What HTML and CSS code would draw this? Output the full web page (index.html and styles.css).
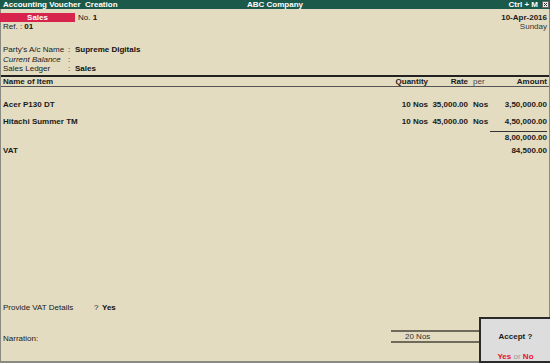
FILE: index.html
```html
<!DOCTYPE html>
<html>
<head>
<meta charset="utf-8">
<link rel="stylesheet" href="styles.css">
</head>
<body>
<div class="screen">
  <div class="titlebar">
    <span class="tb-left">Accounting Voucher&nbsp; Creation</span>
    <span class="tb-center">ABC Company</span>
    <span class="tb-right">Ctrl + M <span class="closebox"><svg width="7" height="7" viewBox="0 0 7 7"><rect x="0.5" y="0.5" width="6" height="6" fill="#e8e8e8" stroke="#666"/><path d="M2 2 L5 5 M5 2 L2 5" stroke="#333" stroke-width="1"/></svg></span></span>
  </div>
  <div class="main">
    <div class="head">
      <div class="head-left">
        <div class="vrow"><span class="vtype">Sales</span><span class="no">No. <b>1</b></span></div>
        <div class="ref">Ref. : <b>01</b></div>
      </div>
      <div class="head-right">
        <div class="date">10-Apr-2016</div>
        <div class="day">Sunday</div>
      </div>
    </div>
    <div class="party">
      <div class="prow"><span class="plabel">Party's A/c Name</span><span class="colon">:</span><b>Supreme Digitals</b></div>
      <div class="prow"><span class="plabel italic">Current Balance</span><span class="colon">:</span></div>
      <div class="prow"><span class="plabel">Sales Ledger</span><span class="colon">:</span><b>Sales</b></div>
    </div>
    <div class="thead grid">
      <span class="c-name">Name of Item</span>
      <span class="c-qty">Quantity</span>
      <span class="c-rate">Rate</span>
      <span class="c-per light">per</span>
      <span class="c-amt">Amount</span>
    </div>
    <div class="items">
      <div class="grid row first">
        <span class="c-name">Acer P130 DT</span>
        <span class="c-qty">10 Nos</span>
        <span class="c-rate">35,000.00</span>
        <span class="c-per">Nos</span>
        <span class="c-amt">3,50,000.00</span>
      </div>
      <div class="grid row">
        <span class="c-name">Hitachi Summer TM</span>
        <span class="c-qty">10 Nos</span>
        <span class="c-rate">45,000.00</span>
        <span class="c-per">Nos</span>
        <span class="c-amt">4,50,000.00</span>
      </div>
      <div class="grid row total">
        <span class="c-name"></span>
        <span class="c-qty"></span>
        <span class="c-rate"></span>
        <span class="c-per"></span>
        <span class="c-amt">8,00,000.00</span>
      </div>
      <div class="grid row vat">
        <span class="c-name">VAT</span>
        <span class="c-qty"></span>
        <span class="c-rate"></span>
        <span class="c-per"></span>
        <span class="c-amt">84,500.00</span>
      </div>
    </div>
    <div class="spacer"></div>
    <div class="vatdetails"><span class="vlabel">Provide VAT Details</span><span class="q">?</span><b>Yes</b></div>
    <div class="footer">
      <span class="narration">Narration:</span>
      <div class="totqty"><span>20 Nos</span></div>
    </div>
    <div class="accept">
      <div class="acc-title">Accept ?</div>
      <div class="acc-opts"><span class="red">Yes</span> <span class="or">or</span> <span class="red">No</span></div>
    </div>
  </div>
</div>
</body>
</html>
```

FILE: styles.css
```css
* { box-sizing: border-box; margin: 0; padding: 0; }
html, body { width: 550px; height: 363px; overflow: hidden; }
body {
  background: #e3dcc1;
  font-family: "Liberation Sans", Arial, sans-serif;
  font-size: 8px;
  color: #1a1a1a;
  white-space: nowrap;
}
b { font-weight: bold; color: #111; }
.screen {
  width: 550px;
  height: 363px;
  display: flex;
  flex-direction: column;
}
.titlebar {
  height: 9px;
  background: #1b5a4a;
  color: #fff;
  font-weight: bold;
  font-size: 8px;
  line-height: 9px;
  display: flex;
  align-items: center;
  padding-left: 3px;
  position: relative;
}
.tb-left { flex: 1; }
.tb-center { position: absolute; left: 0; right: 0; text-align: center; pointer-events: none; }
.tb-right { display: flex; align-items: center; gap: 4px; padding-right: 1px; }
.closebox { display: flex; }
.main {
  flex: 1;
  display: flex;
  flex-direction: column;
  border-left: 1px solid #8a8a80;
  border-right: 1px solid #8a8a80;
  border-bottom: 2px solid #8a8a80;
  position: relative;
}
.head {
  display: flex;
  justify-content: space-between;
  padding-top: 4px;
}
.vrow { display: flex; align-items: center; height: 9px; }
.vtype {
  width: 75px;
  height: 9px;
  background: #d6244c;
  color: #fff;
  font-weight: bold;
  text-align: center;
  line-height: 9px;
  margin-left: -1px;
}
.no { margin-left: 3px; }
.ref { padding-left: 2px; line-height: 10px; }
.head-right { text-align: right; padding-right: 2px; }
.date { font-weight: bold; line-height: 9px; }
.day { line-height: 10px; color: #333; }
.party { padding-top: 13px; padding-left: 2px; }
.prow { display: flex; line-height: 9.5px; height: 9.5px; }
.plabel { width: 65px; flex-shrink: 0; }
.italic { font-style: italic; }
.colon { width: 7px; flex-shrink: 0; }
.grid {
  display: grid;
  grid-template-columns: 1fr 60px 40px 22px 57px;
  padding: 0 2px 0 2px;
}
.c-qty, .c-rate, .c-amt { text-align: right; }
.c-per { padding-left: 5px; }
.thead {
  margin-top: 1px;
  border-top: 2px solid #222;
  border-bottom: 1px solid #555;
  height: 12px;
  line-height: 10px;
  font-weight: bold;
}
.thead .light { font-weight: normal; color: #444; }
.row { font-weight: bold; line-height: 10px; height: 17px; padding-top: 3px; }
.row.first { margin-top: 10px; }
.row.total { height: 14px; padding-top: 0; }
.row.total .c-amt { border-top: 1px solid #333; padding-top: 1px; }
.row.vat { height: 16px; padding-top: 1px; }
.spacer { flex: 1; }
.vatdetails { padding-left: 2px; display: flex; line-height: 10px; margin-bottom: 17px; }
.vlabel { width: 91px; flex-shrink: 0; }
.q { width: 8px; }
.footer { display: flex; align-items: center; height: 13px; padding-left: 2px; margin-bottom: 18px; }
.narration { width: 388px; padding-top: 3px; }
.totqty {
  width: 90px;
  height: 13px;
  border-top: 2px solid #6e6a5c;
  border-bottom: 2px solid #6e6a5c;
  padding-left: 14px;
  line-height: 9px;
  color: #333;
}
.accept {
  position: absolute;
  right: -1px;
  bottom: -2px;
  width: 71px;
  height: 46px;
  background: #dddddd;
  border: 2px solid #2a2a2a;
  border-right: none;
  text-align: center;
  display: flex;
  flex-direction: column;
  justify-content: space-between;
  padding: 13px 0 0;
}
.acc-title { font-weight: bold; line-height: 10px; }
.acc-opts { line-height: 9px; }
.red { color: #e8121e; font-weight: bold; }
.or { color: #999; }
```
